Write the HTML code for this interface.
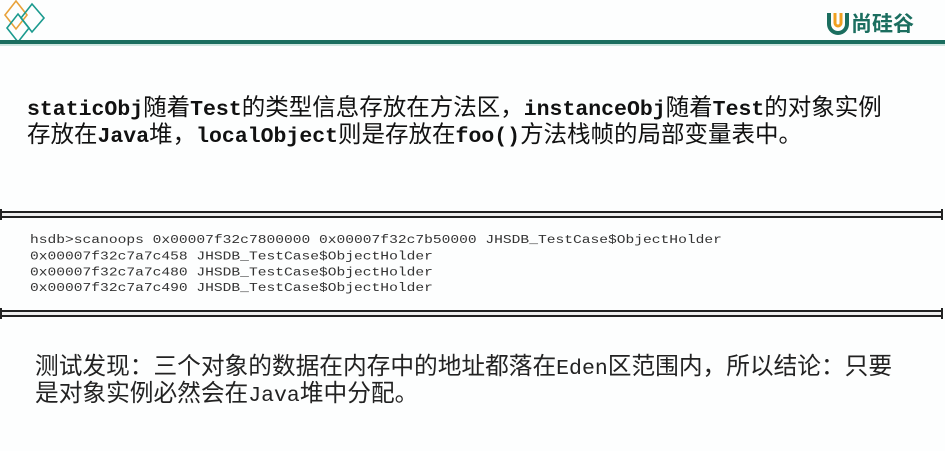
<!DOCTYPE html>
<html><head><meta charset="utf-8"><style>
body{margin:0;width:945px;height:451px;background:#fdfefe;position:relative;overflow:hidden;font-family:"Liberation Sans","Noto Sans CJK SC",sans-serif}
.bar{position:absolute;left:0;top:40px;width:945px;height:4px;background:#1b6e5f}
.bar2{position:absolute;left:0;top:44px;width:945px;height:2px;background:#cfe6e0}
.t{position:absolute;font-size:23.5px;color:#111;line-height:27px;white-space:nowrap}
.m{font-family:"Liberation Mono",monospace;font-weight:bold;font-size:21.5px}
.dl{position:absolute;left:0;width:943px;height:3px;border-top:2px solid #222;border-bottom:2px solid #222;background:#eee}
.dl:before,.dl:after{content:"";position:absolute;top:-4px;width:2px;height:11px;background:#222}
.dl:before{left:0}.dl:after{right:0}
.code{position:absolute;left:30px;top:233px;font-family:"Liberation Mono",monospace;font-size:14.6px;line-height:18.8px;color:#333;white-space:pre;transform:scaleY(0.85);transform-origin:top left}
</style></head><body>
<svg style="position:absolute;left:0;top:0" width="50" height="44" viewBox="0 0 50 44">
<path d="M16 1 L27 15 L16 29 L5 15 Z" fill="none" stroke="#e8a23a" stroke-width="1.6"/>
<path d="M32 4 L44 18 L32 32 L21 18 Z" fill="none" stroke="#1a9a8e" stroke-width="1.6"/>
<path d="M18 14 L29 28 L18 42 L7 28 Z" fill="none" stroke="#1a9a8e" stroke-width="1.6"/>
</svg>
<svg style="position:absolute;top:10px;left:826px" width="24" height="26" viewBox="0 0 24 26">
<path d="M3 3 V14 A9 9 0 0 0 21 14 V3" fill="none" stroke="#1b6e5f" stroke-width="4"/>
<path d="M9 3 V13 A3 3 0 0 0 15 13 V3" fill="none" stroke="#f0a020" stroke-width="3"/>
</svg>
<div style="position:absolute;left:851px;top:8px;font-size:21px;font-weight:bold;color:#1b6e5f;font-family:'Noto Sans CJK SC',sans-serif">尚硅谷</div>
<div class="bar"></div><div class="bar2"></div>
<div class="t" style="left:27px;top:94px"><span class="m">staticObj</span>随着<span class="m">Test</span>的类型信息存放在方法区，<span class="m">instanceObj</span>随着<span class="m">Test</span>的对象实例</div>
<div class="t" style="left:27px;top:121px">存放在<span class="m">Java</span>堆，<span class="m">localObject</span>则是存放在<span class="m">foo()</span>方法栈帧的局部变量表中。</div>
<div class="dl" style="top:211px"></div>
<div class="code">hsdb&gt;scanoops 0x00007f32c7800000 0x00007f32c7b50000 JHSDB_TestCase$ObjectHolder
0x00007f32c7a7c458 JHSDB_TestCase$ObjectHolder
0x00007f32c7a7c480 JHSDB_TestCase$ObjectHolder
0x00007f32c7a7c490 JHSDB_TestCase$ObjectHolder</div>
<div class="dl" style="top:310px"></div>
<div class="t" style="left:35px;top:354px;font-size:23.7px;color:#222">测试发现：三个对象的数据在内存中的地址都落在<span class="m" style="font-weight:normal;font-size:21.5px">Eden</span>区范围内，所以结论：只要</div>
<div class="t" style="left:35px;top:381px;font-size:23.7px;color:#222">是对象实例必然会在<span class="m" style="font-weight:normal;font-size:21.5px">Java</span>堆中分配。</div>
</body></html>
